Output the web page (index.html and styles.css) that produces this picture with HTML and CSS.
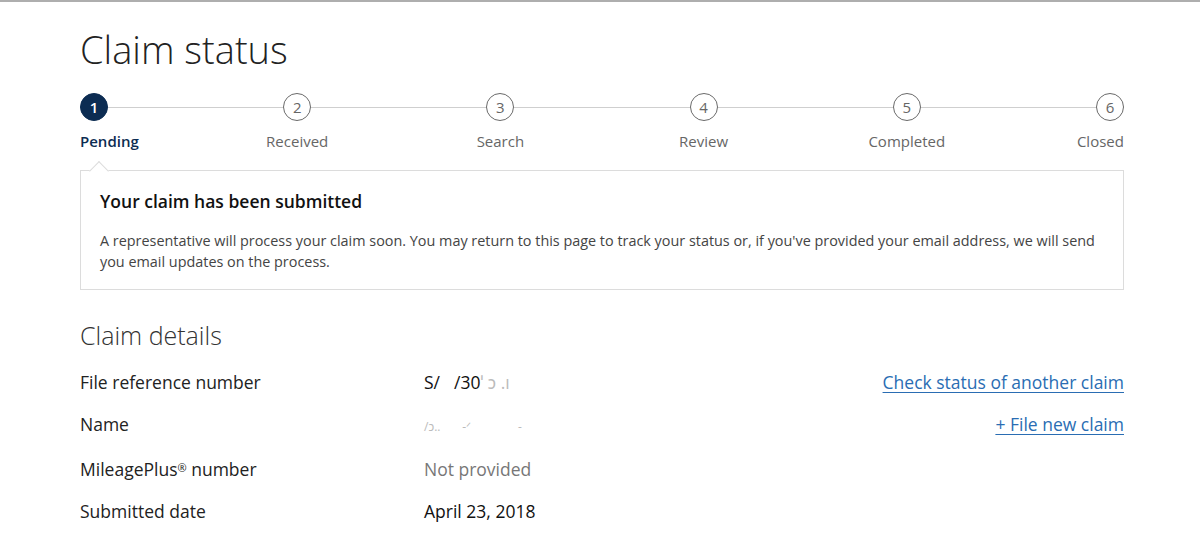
FILE: index.html
```html
<!DOCTYPE html>
<html lang="en">
<head>
<meta charset="utf-8">
<title>Claim status</title>
<link rel="stylesheet" href="styles.css">
</head>
<body>
<main class="page">
  <h1 class="title">Claim status</h1>

  <div class="steps">
    <div class="track">
      <span class="dot active">1</span>
      <span class="dot">2</span>
      <span class="dot">3</span>
      <span class="dot">4</span>
      <span class="dot">5</span>
      <span class="dot">6</span>
    </div>
    <div class="labels">
      <span class="label first active">Pending</span>
      <span class="label">Received</span>
      <span class="label">Search</span>
      <span class="label">Review</span>
      <span class="label">Completed</span>
      <span class="label last">Closed</span>
    </div>
  </div>

  <section class="notice">
    <span class="caret"></span>
    <h2 class="notice-title">Your claim has been submitted</h2>
    <p class="notice-text">A representative will process your claim soon. You may return to this page to track your status or, if you've provided your email address, we will send you email updates on the process.</p>
  </section>

  <h2 class="details-title">Claim details</h2>
  <div class="details">
    <div class="d-label">File reference number</div>
    <div class="d-value"><span>S/</span><span class="gap"></span><span>/30</span><span class="faint">ˈ ɔ .ı</span></div>
    <div class="d-link"><a href="#">Check status of another claim</a></div>

    <div class="d-label">Name</div>
    <div class="d-value"><span class="faint small">/ɔ.. &nbsp; &nbsp; &nbsp; ‑ᐟ &nbsp; &nbsp; &nbsp; &nbsp; &nbsp; &nbsp; &nbsp; -</span></div>
    <div class="d-link"><a href="#">+ File new claim</a></div>

    <div class="d-label">MileagePlus<sup>®</sup> number</div>
    <div class="d-value muted">Not provided</div>
    <div class="d-link"></div>

    <div class="d-label">Submitted date</div>
    <div class="d-value">April 23, 2018</div>
    <div class="d-link"></div>
  </div>
</main>
</body>
</html>
```

FILE: styles.css
```css
* { box-sizing: border-box; }

html, body {
  margin: 0;
  padding: 0;
  background: #fff;
}

body {
  border-top: 2px solid #aeaeae;
  font-family: "Open Sans", "Noto Sans", "Liberation Sans", sans-serif;
  color: #222;
}

.page {
  width: 1044px;
  margin-left: 80px;
  padding-top: 24px;
}

.title {
  margin: 0;
  font-size: 38px;
  line-height: 46px;
  font-weight: 300;
  color: #222;
}

.steps {
  margin-top: 21px;
}

.track {
  display: flex;
  justify-content: space-between;
  background: linear-gradient(#cfcfcf, #cfcfcf) center / 100% 1px no-repeat;
}

.dot {
  width: 28px;
  height: 28px;
  border-radius: 50%;
  border: 1px solid #6a6a6a;
  background: #fff;
  color: #666;
  font-size: 15px;
  display: flex;
  align-items: center;
  justify-content: center;
}

.dot.active {
  background: #0c2c52;
  border-color: #0c2c52;
  color: #fff;
  font-weight: 600;
}

.labels {
  display: flex;
  justify-content: space-between;
  margin-top: 10px;
}

.label {
  width: 28px;
  display: flex;
  justify-content: center;
  white-space: nowrap;
  font-size: 15px;
  line-height: 20px;
  color: #666;
}

.label.first { justify-content: flex-start; }
.label.last { justify-content: flex-end; }

.label.active {
  color: #0c2c52;
  font-weight: 600;
}

.notice {
  position: relative;
  margin-top: 19px;
  border: 1px solid #dcdcdc;
  padding: 18px 19px 17px;
}

.caret {
  position: absolute;
  top: -7px;
  left: 11px;
  width: 14px;
  height: 14px;
  background: #fff;
  border-top: 1px solid #dcdcdc;
  border-left: 1px solid #dcdcdc;
  transform: rotate(45deg);
}

.notice-title {
  margin: 0;
  font-size: 17.5px;
  line-height: 24px;
  font-weight: 600;
  color: #111;
}

.notice-text {
  margin: 17px 0 0;
  font-size: 14.4px;
  line-height: 21px;
  color: #444;
}

.details-title {
  margin: 28px 0 0;
  font-size: 25px;
  line-height: 34px;
  font-weight: 300;
  color: #333;
}

.details {
  margin-top: 9px;
  display: grid;
  grid-template-columns: 344px 1fr auto;
  font-size: 17.5px;
  line-height: 42px;
}

.d-label { color: #222; }

.d-label sup {
  font-size: 11px;
  vertical-align: 4px;
  line-height: 0;
}

.d-value { color: #111; white-space: pre; }
.d-value .gap { display: inline-block; width: 14px; }
.d-value .faint { color: #bbb; }
.d-value .small { font-size: 12px; }
.d-value.muted { color: #777; }

.d-link { text-align: right; }

.d-link a {
  color: #2a6db3;
  text-decoration: underline;
  text-underline-offset: 3px;
  text-decoration-thickness: 1px;
}
```
